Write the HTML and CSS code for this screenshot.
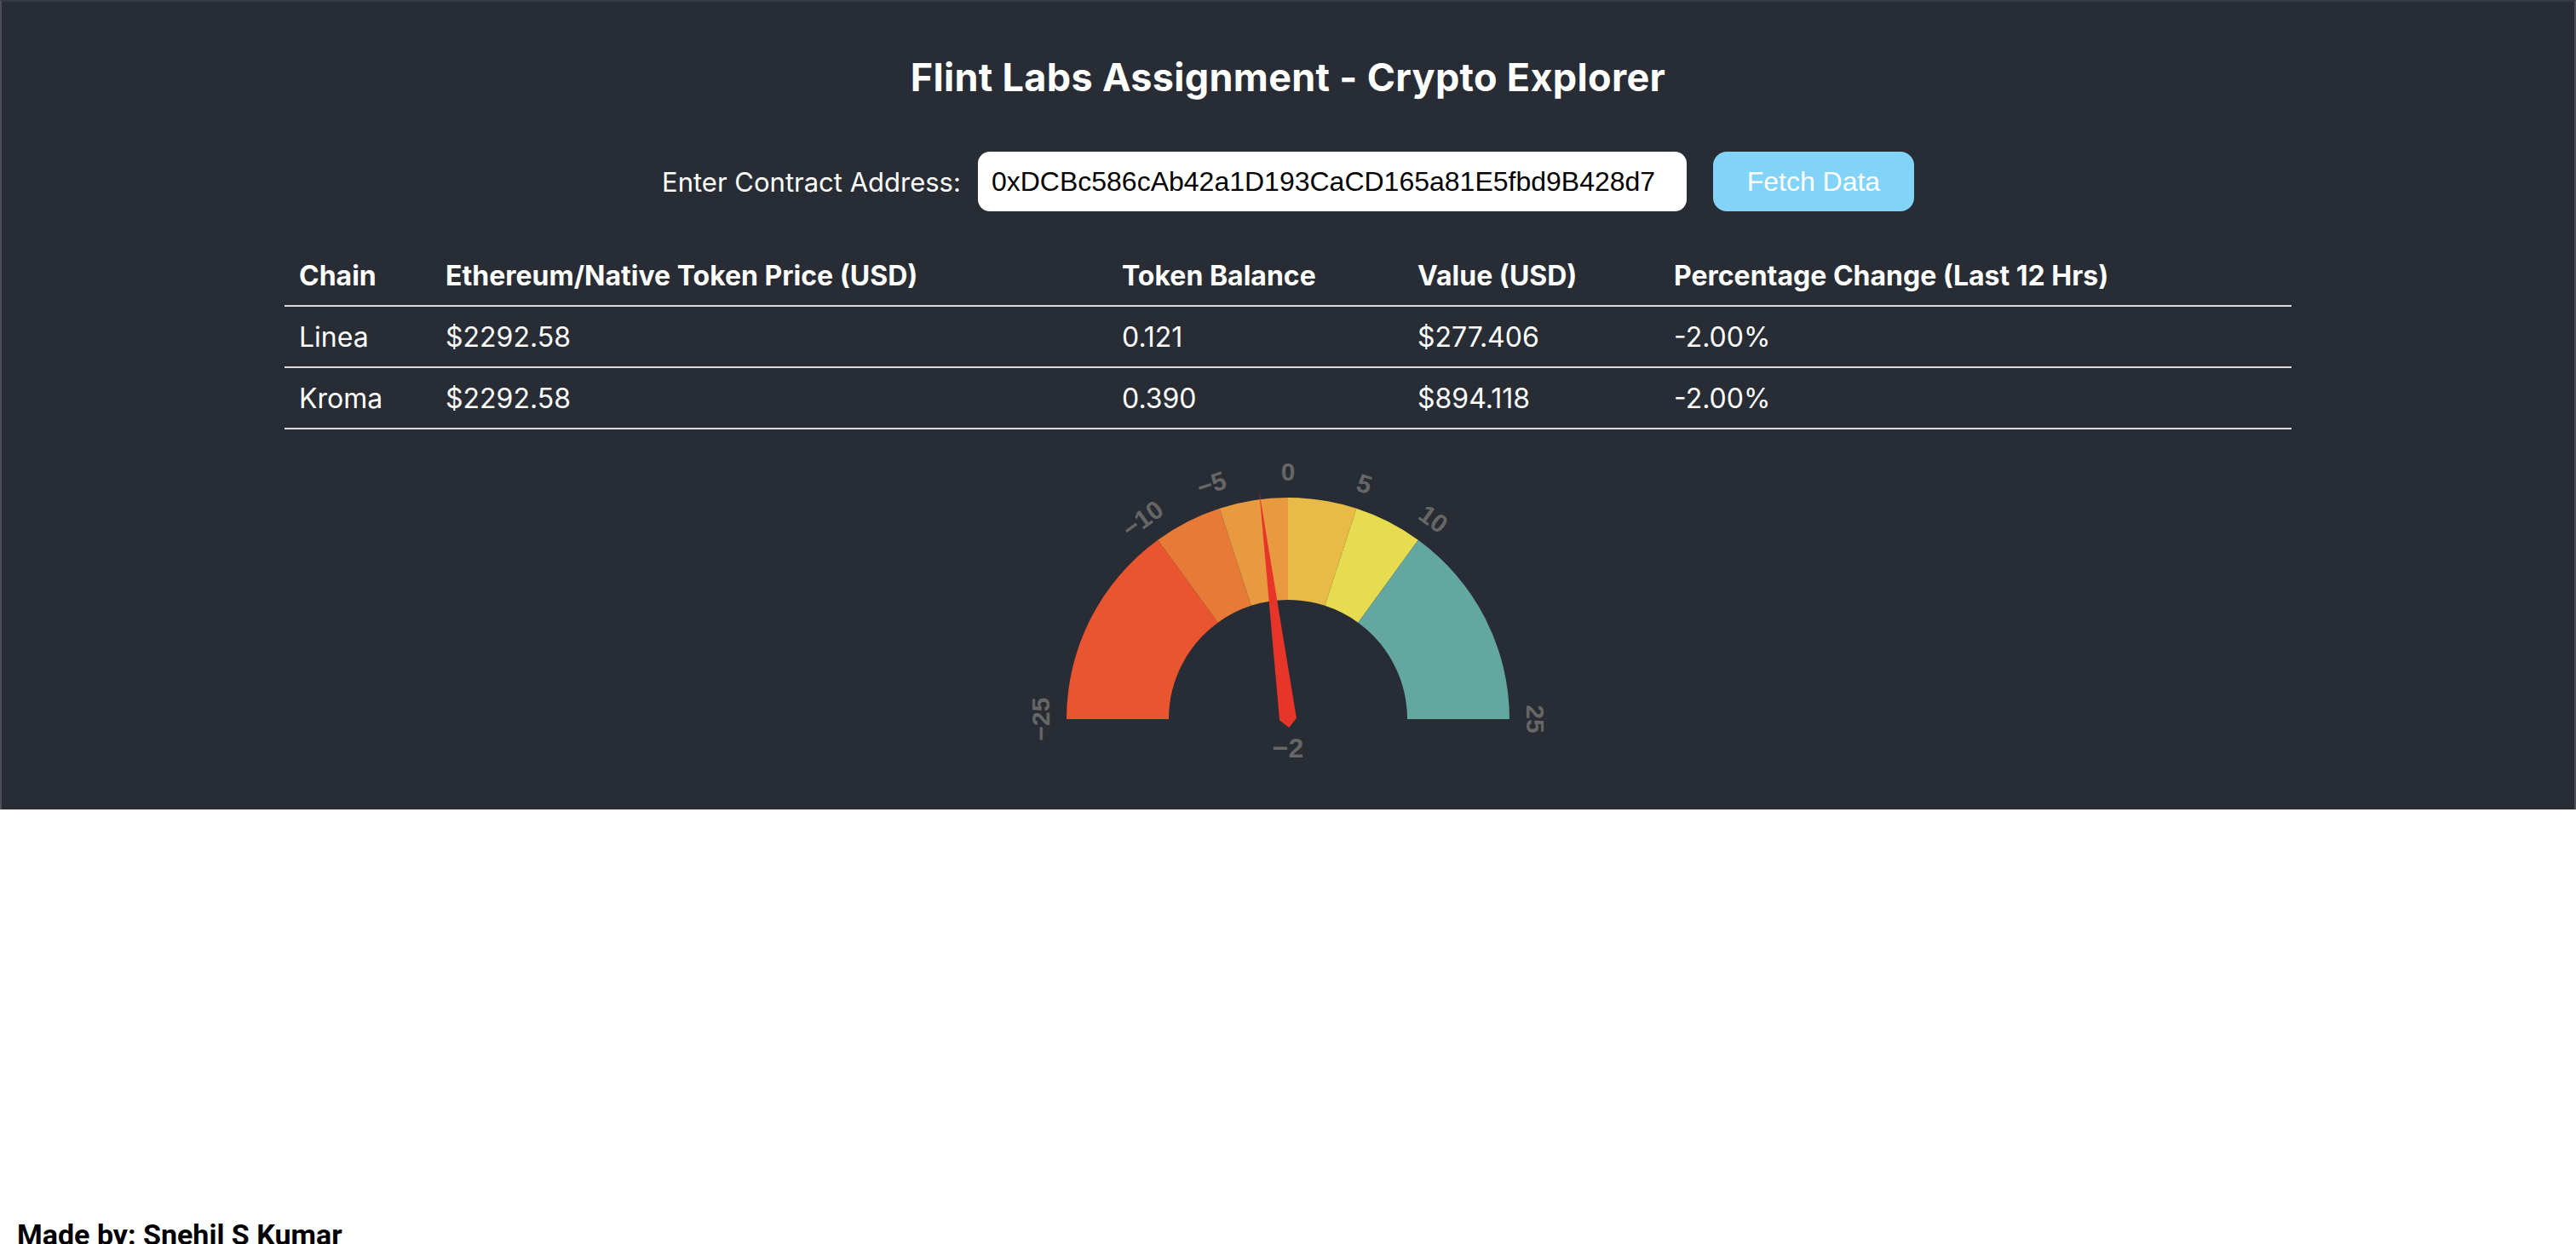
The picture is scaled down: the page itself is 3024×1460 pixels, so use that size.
FILE: index.html
```html
<!DOCTYPE html>
<html lang="en">
<head>
<meta charset="utf-8">
<title>Flint Labs Assignment - Crypto Explorer</title>
<link rel="stylesheet" href="styles.css">
</head>
<body>
<div class="app">
  <header class="panel">
    <h1 class="title">Flint Labs Assignment - Crypto Explorer</h1>
    <div class="form-row">
      <label class="form-label" for="addr">Enter Contract Address:</label>
      <input class="addr-input" id="addr" type="text" value="0xDCBc586cAb42a1D193CaCD165a81E5fbd9B428d7">
      <button class="fetch-btn" type="button">Fetch Data</button>
    </div>
    <table class="tokens">
      <thead>
        <tr>
          <th class="c-chain">Chain</th>
          <th class="c-price">Ethereum/Native Token Price (USD)</th>
          <th class="c-bal">Token Balance</th>
          <th class="c-val">Value (USD)</th>
          <th class="c-pct">Percentage Change (Last 12 Hrs)</th>
        </tr>
      </thead>
      <tbody>
        <tr>
          <td>Linea</td>
          <td>$2292.58</td>
          <td>0.121</td>
          <td>$277.406</td>
          <td>-2.00%</td>
        </tr>
        <tr>
          <td>Kroma</td>
          <td>$2292.58</td>
          <td>0.390</td>
          <td>$894.118</td>
          <td>-2.00%</td>
        </tr>
      </tbody>
    </table>
    <div class="gauge">
      <svg class="gauge-svg" width="700" height="400" viewBox="0 0 700 400">
        <g class="arcs">
          <path class="seg seg-1" d="M90 323 A260 260 0 0 1 197.18 112.66 L267.71 209.74 A140 140 0 0 0 210 323 Z"/>
          <path class="seg seg-2" d="M197.18 112.66 A260 260 0 0 1 269.66 75.73 L306.74 189.85 A140 140 0 0 0 267.71 209.74 Z"/>
          <path class="seg seg-3" d="M269.66 75.73 A260 260 0 0 1 350 63 L350 183 A140 140 0 0 0 306.74 189.85 Z"/>
          <path class="seg seg-4" d="M350 63 A260 260 0 0 1 430.34 75.73 L393.26 189.85 A140 140 0 0 0 350 183 Z"/>
          <path class="seg seg-5" d="M430.34 75.73 A260 260 0 0 1 502.82 112.66 L432.29 209.74 A140 140 0 0 0 393.26 189.85 Z"/>
          <path class="seg seg-6" d="M502.82 112.66 A260 260 0 0 1 610 323 L490 323 A140 140 0 0 0 432.29 209.74 Z"/>
        </g>
        <g class="labels">
          <text class="tick" transform="translate(350 323) rotate(-90) translate(0 -280)">−25</text>
          <text class="tick" transform="translate(350 323) rotate(-36) translate(0 -280)">−10</text>
          <text class="tick" transform="translate(350 323) rotate(-18) translate(0 -280)">−5</text>
          <text class="tick" transform="translate(350 323) rotate(0) translate(0 -280)">0</text>
          <text class="tick" transform="translate(350 323) rotate(18) translate(0 -280)">5</text>
          <text class="tick" transform="translate(350 323) rotate(36) translate(0 -280)">10</text>
          <text class="tick" transform="translate(350 323) rotate(90) translate(0 -280)">25</text>
        </g>
        <g class="needle" transform="translate(350 323) rotate(-7.2)">
          <path class="needle-path" d="M10 0 L0 -270 L-10 0 L0 10 Z"/>
        </g>
        <text class="current" x="350" y="368">−2</text>
      </svg>
    </div>
  </header>
  <footer class="credit">Made by: Snehil S Kumar</footer>
</div>
</body>
</html>
```

FILE: styles.css
```css
html, body {
  margin: 0;
  padding: 0;
  background: #ffffff;
}

body {
  font-family: Inter, "Noto Sans", sans-serif;
}

.app {
  display: flex;
  flex-direction: column;
}

.panel {
  box-sizing: border-box;
  height: 950px;
  background: #282c34;
  border-top: 2px solid #363a45;
  border-left: 2px solid #4e5057;
  border-right: 2px solid #4e5057;
  color: #ffffff;
  display: flex;
  flex-direction: column;
  align-items: center;
  padding-top: 63px;
}

.title {
  margin: 0;
  font-size: 45px;
  line-height: 52px;
  font-weight: 700;
  color: #ffffff;
  letter-spacing: 0.3px;
}

.form-row {
  margin-top: 61px;
  display: flex;
  align-items: center;
  justify-content: center;
}

.form-label {
  font-size: 31px;
  color: #ffffff;
  margin-right: 20px;
}

.addr-input {
  box-sizing: border-box;
  width: 832px;
  height: 70px;
  border: none;
  border-radius: 14px;
  padding: 0 16px;
  background: #ffffff;
  color: #000000;
  font-family: "Liberation Sans", Arial, sans-serif;
  font-size: 32px;
  outline: none;
}

.fetch-btn {
  box-sizing: border-box;
  margin-left: 31px;
  width: 236px;
  height: 70px;
  border: none;
  border-radius: 16px;
  background: #81d4f7;
  color: #ffffff;
  font-family: "Liberation Sans", Arial, sans-serif;
  font-size: 32px;
  padding: 0;
}

.tokens {
  margin-top: 40px;
  width: 2356px;
  border-collapse: collapse;
  table-layout: fixed;
  font-size: 32px;
  color: #ffffff;
}

.tokens th,
.tokens td {
  height: 70px;
  padding: 0 17px;
  text-align: left;
  vertical-align: middle;
  border-bottom: 2px solid #dddddd;
  white-space: nowrap;
}

.tokens th {
  font-weight: 700;
}

.tokens td {
  font-weight: 400;
}

.c-chain { width: 138px; }
.c-price { width: 760px; }
.c-bal { width: 313px; }
.c-val { width: 267px; }
.c-pct { width: auto; }

.gauge {
  margin-top: 17px;
  display: flex;
  justify-content: center;
}

.gauge-svg {
  display: block;
  overflow: visible;
}

.seg-1 { fill: #e9552f; }
.seg-2 { fill: #e87a37; }
.seg-3 { fill: #e89a40; }
.seg-4 { fill: #e8ba48; }
.seg-5 { fill: #e7dc4f; }
.seg-6 { fill: #63a7a0; }

.tick {
  font-family: "Liberation Sans", Arial, sans-serif;
  font-size: 30px;
  font-weight: 700;
  fill: #666666;
  text-anchor: middle;
}

.needle-path {
  fill: #e8352a;
}

.current {
  font-family: "Liberation Sans", Arial, sans-serif;
  font-size: 32px;
  font-weight: 700;
  fill: #666666;
  text-anchor: middle;
}

.credit {
  margin-top: 478px;
  padding-left: 20px;
  font-family: Roboto, "Liberation Sans", sans-serif;
  font-size: 34px;
  line-height: 42px;
  font-weight: 700;
  color: #000000;
}
```
